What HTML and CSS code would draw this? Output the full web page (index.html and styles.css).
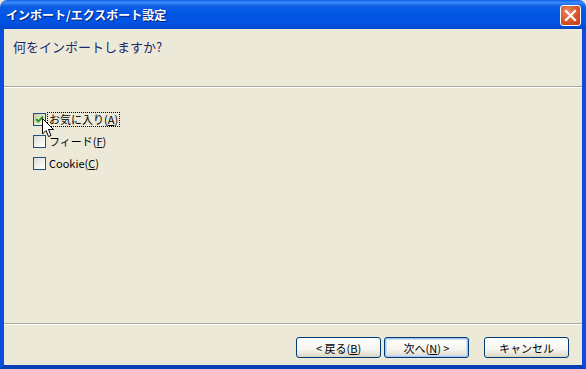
FILE: index.html
```html
<!DOCTYPE html>
<html lang="ja">
<head>
    <meta charset="UTF-8">
    <title>インポート/エクスポート設定</title>
    <link rel="stylesheet" href="styles.css">
</head>
<body>
    <div class="window">
        <div class="titlebar">
            <span class="title">インポート/エクスポート設定</span>
            <span class="close-btn">
                <svg width="13" height="13" viewBox="0 0 13 13">
                    <path d="M2 2 L11 11 M11 2 L2 11" stroke="#fff" stroke-width="2.2" stroke-linecap="square"/>
                </svg>
            </span>
        </div>
        <div class="frame">
            <div class="header">
                <p class="question">何をインポートしますか?</p>
            </div>
            <div class="content">
                <label class="option">
                    <span class="check checked">
                        <svg width="11" height="11" viewBox="0 0 11 11">
                            <path d="M2 5 L4.3 7.5 L9 2.5" fill="none" stroke="#21a121" stroke-width="2"/>
                        </svg>
                    </span>
                    <span class="text focused">お気に入り(<u>A</u>)</span>
                </label>
                <label class="option">
                    <span class="check"></span>
                    <span class="text">フィード(<u>F</u>)</span>
                </label>
                <label class="option">
                    <span class="check"></span>
                    <span class="text">Cookie(<u>C</u>)</span>
                </label>
                <!-- mouse pointer -->
                <svg class="cursor" width="13" height="20" viewBox="0 0 13 20">
                    <path d="M0.5 0.5 L0.5 16 L4 12.5 L6.5 18.5 L9 17.5 L6.5 11.5 L11.5 11.5 Z" fill="#fff" stroke="#000" stroke-width="1"/>
                </svg>
            </div>
            <div class="footer">
                <button class="btn">&lt; 戻る(<u>B</u>)</button>
                <button class="btn default">次へ(<u>N</u>) &gt;</button>
                <button class="btn cancel">キャンセル</button>
            </div>
        </div>
    </div>
</body>
</html>
```

FILE: styles.css
```css
body {
    margin: 0;
    font-family: "Noto Sans CJK JP", "DejaVu Sans", sans-serif;
    font-size: 12px;
    background-color: #ece9d8;
}
.window {
    width: 586px;
    height: 369px;
    display: flex;
    flex-direction: column;
    background-color: #ece9d8;
}
.titlebar {
    height: 29px;
    flex-shrink: 0;
    display: flex;
    align-items: center;
    justify-content: space-between;
    padding: 0 5px 0 6px;
    box-sizing: border-box;
    background: linear-gradient(to bottom, #0a5fe8 0%, #3d8bf8 8%, #0c5ee6 22%, #0055e5 50%, #0152e2 80%, #0047c9 100%);
    border-radius: 7px 7px 0 0;
}
.title {
    color: white;
    font-weight: bold;
    font-size: 12px;
    text-shadow: 1px 1px 0 #0a1e73;
}
.close-btn {
    width: 21px;
    height: 21px;
    box-sizing: border-box;
    border: 1px solid #fff;
    border-radius: 3px;
    background: radial-gradient(circle at 35% 30%, #e88a6c 0%, #d6532a 55%, #c03d14 100%);
    display: flex;
    align-items: center;
    justify-content: center;
    margin-top: 1px;
}
.frame {
    flex: 1;
    display: flex;
    flex-direction: column;
    border-left: 4px solid #0a4fdc;
    border-right: 4px solid #0a4fdc;
    border-bottom: 4px solid #0a3fb8;
    background-color: #ece9d8;
}
.header {
    height: 57px;
    border-bottom: 1px solid #aca899;
    box-shadow: 0 1px 0 #fff;
}
.question {
    margin: 8px 0 0 9px;
    font-size: 13px;
    color: #1e2b6b;
}
.content {
    position: relative;
    flex: 1;
    padding: 26px 0 0 29px;
    display: flex;
    flex-direction: column;
    gap: 9px;
}
.option {
    display: flex;
    align-items: center;
    height: 13px;
    color: #000;
}
.check {
    width: 13px;
    height: 13px;
    box-sizing: border-box;
    border: 1px solid #1c5180;
    background: linear-gradient(135deg, #dcdbd4 0%, #f4f4f0 60%, #ffffff 100%);
    display: flex;
    align-items: center;
    justify-content: center;
    margin-right: 1px;
}
.check.checked {
    background: linear-gradient(135deg, #c9c7a8 0%, #f0efd8 70%, #fff 100%);
}
.text {
    font-size: 11px;
    padding: 0 1px;
    line-height: 13px;
    border: 1px dotted transparent;
}
.text.focused {
    border-color: #000;
}
.cursor {
    position: absolute;
    left: 38px;
    top: 31px;
}
.footer {
    height: 28px;
    flex-shrink: 0;
    border-top: 1px solid #aca899;
    box-shadow: inset 0 1px 0 #fff;
    display: flex;
    align-items: flex-start;
    padding: 13px 0 0 292px;
}
.btn {
    width: 85px;
    height: 21px;
    margin-right: 3px;
    font-family: "Noto Sans CJK JP", "DejaVu Sans", sans-serif;
    font-size: 11px;
    color: #000;
    border: 1px solid #003c74;
    border-radius: 3px;
    background: linear-gradient(to bottom, #ffffff 0%, #f5f4ee 60%, #e3e0d2 90%, #d6d0c5 100%);
    padding: 0;
}
.btn.default {
    box-shadow: inset 0 0 0 1px #a9c4f1, inset 0 0 0 2px #cfdcf6;
}
.btn.cancel {
    margin-left: 12px;
}
```
